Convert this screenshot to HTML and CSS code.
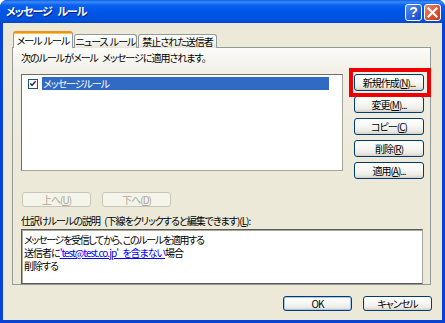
FILE: index.html
```html
<!DOCTYPE html>
<html lang="ja">
<head>
<meta charset="utf-8">
<title>メッセージ ルール</title>
<link rel="stylesheet" href="styles.css">
</head>
<body>
<div class="window">
  <div class="titlebar">
    <span class="title">メッセージ ルール</span>
    <div class="tb-buttons">
      <span class="tb help">?</span>
      <span class="tb close"><svg width="11" height="11" viewBox="0 0 11 11"><path d="M1.5 1.5 L9.5 9.5 M9.5 1.5 L1.5 9.5" stroke="#fff" stroke-width="2.2" stroke-linecap="square"/></svg></span>
    </div>
  </div>
  <div class="client">
    <div class="tabs">
      <div class="tab active">メール&nbsp;ルール</div>
      <div class="tab">ニュース&nbsp;ルール</div>
      <div class="tab">禁止された送信者</div>
    </div>
    <div class="panel">
      <div class="label">次のルールがメール&nbsp;メッセージに適用されます。</div>
      <div class="main-row">
        <div class="list">
          <div class="item">
            <span class="check"><svg width="9" height="9" viewBox="0 0 9 9"><path d="M1.5 4.5 L3.5 6.5 L7.5 2" fill="none" stroke="#21215E" stroke-width="1.6"/></svg></span>
            <span class="sel">メッセージルール</span>
          </div>
        </div>
        <div class="side-buttons">
          <div class="hl">
            <button class="btn">新規作成(<u>N</u>)...</button>
            <div class="redbox"></div>
          </div>
          <button class="btn">変更(<u>M</u>)...</button>
          <button class="btn">コピー(<u>C</u>)</button>
          <button class="btn">削除(<u>R</u>)</button>
          <button class="btn">適用(<u>A</u>)...</button>
        </div>
      </div>
      <div class="move-row">
        <button class="btn small" disabled>上へ(<u>U</u>)</button>
        <button class="btn small" disabled>下へ(<u>D</u>)</button>
      </div>
      <div class="label label2">仕訳けルールの説明 (下線をクリックすると編集できます)(<u>L</u>):</div>
      <div class="desc">
        <div class="line l1">メッセージを受信してから、このルールを適用する</div>
        <div class="line">送信者に<a class="link">'test@test.co.jp' を含まない</a>場合</div>
        <div class="line">削除する</div>
      </div>
    </div>
    <div class="footer">
      <button class="btn small default">OK</button>
      <button class="btn small">キャンセル</button>
    </div>
  </div>
</div>
</body>
</html>
```

FILE: styles.css
```css
* { box-sizing: border-box; }
html, body { margin: 0; padding: 0; }
body {
  width: 445px;
  height: 323px;
  overflow: hidden;
  font-family: "Noto Sans CJK JP", "Liberation Sans", sans-serif;
  font-size: 10px;
  letter-spacing: -1px;
  word-spacing: 3px;
  font-feature-settings: "palt";
  color: #000;
}
.window {
  width: 445px;
  height: 323px;
  display: flex;
  flex-direction: column;
  background: #0842D8;
  border-radius: 7px 7px 0 0;
}
.titlebar {
  height: 23px;
  flex: none;
  display: flex;
  align-items: center;
  justify-content: space-between;
  padding: 0 4px 0 6px;
  border-radius: 7px 7px 0 0;
  background: linear-gradient(#0A5FE8 0, #3D8BF5 2px, #0A63EE 5px, #0058EE 9px, #0054E3 14px, #0052DD 20px, #0046C8 23px);
}
.title {
  color: #fff;
  font-weight: bold;
  font-size: 11px;
  line-height: 13px;
  text-shadow: 1px 1px 0 #0A1E80;
  letter-spacing: -1px;
  word-spacing: 4px;
}
.tb-buttons { display: flex; gap: 2px; padding-top: 1px; }
.tb {
  width: 17px;
  height: 17px;
  border: 1px solid #fff;
  border-radius: 3px;
  display: flex;
  align-items: center;
  justify-content: center;
  color: #fff;
  font-weight: bold;
  font-family: "Liberation Sans", sans-serif;
  font-size: 14px;
  letter-spacing: 0;
  line-height: 1;
}
.help { background: linear-gradient(135deg, #5C8CF2, #2A5FE0 60%, #1A48C8); }
.close { background: linear-gradient(135deg, #F08A6A, #E0502E 55%, #C63A18); }

.client {
  flex: 1;
  margin: 0 3px 3px 3px;
  background: #ECE9D8;
  padding: 8px 10px 0 9px;
  display: flex;
  flex-direction: column;
}
.tabs {
  display: flex;
  align-items: flex-end;
  height: 17px;
  padding-left: 1px;
  gap: 1px;
  position: relative;
  z-index: 1;
  margin-bottom: -1px;
}
.tab {
  height: 14px;
  padding: 0;
  border: 1px solid #919B9C;
  border-bottom: none;
  border-radius: 3px 3px 0 0;
  background: linear-gradient(#FFFFFF, #F3F2EC 60%, #E6E4DA);
  line-height: 13px;
  white-space: nowrap;
  text-align: center;
  word-spacing: 1px;
  overflow: hidden;
}
.tab:nth-child(1) { width: 60px; }
.tab:nth-child(2) { width: 63px; }
.tab:nth-child(3) { width: 79px; }
.tab.active {
  height: 17px;
  background: #FBFBF8;
  border-top: 2px solid #E8912A;
  box-shadow: inset 0 1px 0 #FFC83C;
  line-height: 16px;
}
.panel {
  width: 419px;
  height: 238px;
  border: 1px solid #919B9C;
  background: linear-gradient(#FBFBF8 0, #F1EFE6 25px, #ECE9D8 120px, #ECE9D8);
  padding: 3px 0 0 8px;
  display: flex;
  flex-direction: column;
}
.label {
  line-height: 13px;
  height: 13px;
  white-space: nowrap;
}
.main-row {
  display: flex;
  align-items: flex-start;
  margin-top: 10px;
  gap: 11px;
}
.list {
  width: 322px;
  height: 97px;
  background: #fff;
  border: 1px solid #7F7F7F;
  border-color: #716F64 #A8A69B #A8A69B #716F64;
  padding: 2px 0 0 6px;
}
.item { display: flex; align-items: center; height: 13px; }
.check {
  width: 10px;
  height: 10px;
  border: 1px solid #1C5180;
  background: #fff;
  display: flex;
  align-items: center;
  justify-content: center;
  margin-right: 4px;
}
.sel {
  width: 287px;
  height: 13px;
  line-height: 13px;
  background: #316AC5;
  color: #fff;
  padding-left: 1px;
}
.side-buttons {
  display: flex;
  flex-direction: column;
  gap: 5px;
}
.hl { position: relative; }
.redbox {
  position: absolute;
  left: -5px;
  top: -6px;
  width: 82px;
  height: 29px;
  border: 4px solid #EE0000;
  pointer-events: none;
}
.btn {
  width: 70px;
  height: 17px;
  padding: 0;
  border: 1px solid #003C74;
  border-radius: 3px;
  background: linear-gradient(#FFFFFF, #F7F7F4 45%, #ECEBE5 80%, #D6D0C5);
  font-family: "Noto Sans CJK JP", "Liberation Sans", sans-serif;
  font-size: 10px;
  letter-spacing: -1px;
  font-feature-settings: "palt";
  line-height: 13px;
  color: #000;
  display: flex;
  align-items: center;
  justify-content: center;
  white-space: nowrap;
}
.btn u { text-underline-offset: 1px; }
.btn.small { width: 69px; height: 15px; }
.btn:disabled {
  border-color: #C9C7BA;
  background: #F5F4EA;
  color: #ACA899;
}
.btn.default { box-shadow: inset 0 0 0 1px #A8C6F5; }
.move-row {
  display: flex;
  gap: 11px;
  margin-top: 13px;
  padding-left: 1px;
}
.label2 { margin-top: 7px; }
.desc {
  margin-top: 2px;
  width: 402px;
  height: 59px;
  background: #fff;
  border: 1px solid #7F7F7F;
  border-color: #5E5C52 #A8A69B #5E5C52 #5E5C52;
  box-shadow: inset 1px 1px 0 #A8A69B;
  padding: 3px 2px;
}
.line { height: 13px; line-height: 13px; white-space: nowrap; }
.l1 { letter-spacing: -1.3px; }
.link {
  color: #0000FF;
  text-decoration: underline;
  text-underline-offset: 1px;
}
.footer {
  display: flex;
  justify-content: flex-end;
  gap: 11px;
  margin-top: 11px;
}
```
